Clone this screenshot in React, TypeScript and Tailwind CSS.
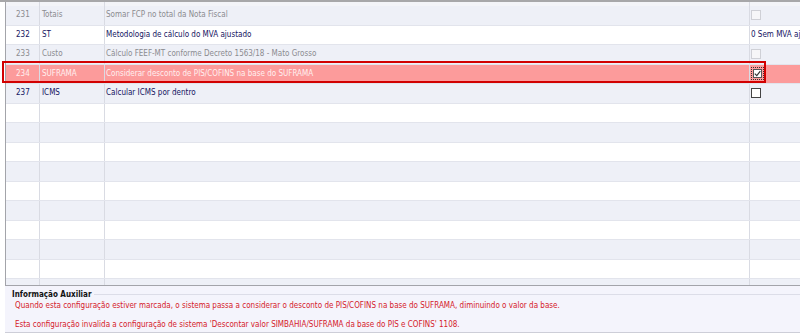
import React from 'react';

type Row = {
  code?: string;
  group?: string;
  desc?: string;
  tone?: 'muted' | 'active' | 'selected';
  extra?: string;
  box?: 'disabled' | 'empty' | 'checked';
};

const rows: Row[] = [
  { code: '231', group: 'Totais', desc: 'Somar FCP no total da Nota Fiscal', tone: 'muted', box: 'disabled' },
  { code: '232', group: 'ST', desc: 'Metodologia de cálculo do MVA ajustado', tone: 'active', extra: '0 Sem MVA ajustado' },
  { code: '233', group: 'Custo', desc: 'Cálculo FEEF-MT conforme Decreto 1563/18 - Mato Grosso', tone: 'muted', box: 'disabled' },
  { code: '234', group: 'SUFRAMA', desc: 'Considerar desconto de PIS/COFINS na base do SUFRAMA', tone: 'selected', box: 'checked' },
  { code: '237', group: 'ICMS', desc: 'Calcular ICMS por dentro', tone: 'active', box: 'empty' },
  ...Array.from({ length: 10 }, () => ({} as Row)),
];

const CheckBox: React.FC<{ kind: 'disabled' | 'empty' | 'checked' }> = ({ kind }) => {
  if (kind === 'disabled') {
    return <span className="block w-[10px] h-[10px] border border-[#cfd0d6] bg-[#f6f6f8]" />;
  }
  if (kind === 'checked') {
    return (
      <span className="block p-[1px] border border-dotted border-[#333]">
        <span className="flex items-center justify-center w-[9px] h-[9px] border border-[#555] bg-white">
          <svg width="7" height="7" viewBox="0 0 7 7">
            <path d="M0.8 3.6 L2.8 5.6 L6.3 1.2" fill="none" stroke="#333" strokeWidth="1.2" />
          </svg>
        </span>
      </span>
    );
  }
  return <span className="block w-[10px] h-[10px] border border-[#444] bg-white" />;
};

const GridRow: React.FC<{ row: Row; index: number }> = ({ row, index }) => {
  let bg = index % 2 === 0 ? 'bg-[#eef0f7]' : 'bg-white';
  let text = 'text-[#8b8b8f]';
  if (row.tone === 'active') text = 'text-[#14145f]';
  if (row.tone === 'selected') {
    bg = 'bg-[#fc9b9b]';
    text = 'text-[#fff0f0]';
  }
  return (
    <div className={`flex h-[19.5px] shrink-0 border-b border-[#e2e4ec] text-[8px] leading-none ${bg} ${text}`}>
      <div className="w-[34px] shrink-0 border-r border-[#d9dbe3] flex items-center pl-[10px]">{row.code}</div>
      <div className="w-[65px] shrink-0 border-r border-[#d9dbe3] flex items-center pl-[2px]">{row.group}</div>
      <div className="w-[645px] shrink-0 border-r border-[#d9dbe3] flex items-center pl-[1px]">{row.desc}</div>
      <div className="flex-1 min-w-0 flex items-center pl-[1px] overflow-hidden whitespace-nowrap">
        {row.box && <CheckBox kind={row.box} />}
        {row.extra && <span className="text-[#14145f]">{row.extra}</span>}
      </div>
    </div>
  );
};

export default function App() {
  return (
    <div className="relative w-[800px] h-[336px] bg-white overflow-hidden font-['DejaVu_Sans_Condensed','DejaVu_Sans',sans-serif]">
      <div className="h-[2px] bg-[#a7a7a9]" />
      <div className="flex h-[331px]">
        <div className="w-[2px] bg-[#3a85c6]" />
        <div className="flex-1 flex flex-col pl-[5px] pr-[2px]">
          <div className="h-[284px] shrink-0 flex flex-col overflow-hidden border-l border-r border-b border-[#a3a4aa]">
            <div className="flex h-[4px] shrink-0 bg-[#f3f4f8]">
              <div className="w-[34px] border-r border-[#d9dbe3]" />
              <div className="w-[65px] border-r border-[#d9dbe3]" />
              <div className="w-[645px] border-r border-[#d9dbe3]" />
            </div>
            {rows.map((r, i) => (
              <GridRow key={i} row={r} index={i} />
            ))}
          </div>
          <div className="flex-1 bg-[#f4f4fc] border-r border-b border-[#cdced8] pl-[7px] pt-[4px]">
            <div className="flex items-center h-[9px]">
              <span className="text-[8px] font-bold text-[#111] leading-none whitespace-nowrap">Informação Auxiliar</span>
              <div className="flex-1 ml-[2px] h-px bg-[#dcdde8]" />
            </div>
            <div className="pl-[3px] text-[8px] leading-none text-[#d4202a]">
              <p className="mt-[3px]">
                Quando esta configuração estiver marcada, o sistema passa a considerar o desconto de PIS/COFINS na base do SUFRAMA, diminuindo o valor da base.
              </p>
              <p className="mt-[11px]">
                Esta configuração invalida a configuração de sistema 'Descontar valor SIMBAHIA/SUFRAMA da base do PIS e COFINS' 1108.
              </p>
            </div>
          </div>
        </div>
      </div>
      <div className="absolute left-[2px] top-[61px] w-[764px] h-[22px] border-2 border-[#d20000]" />
    </div>
  );
}
